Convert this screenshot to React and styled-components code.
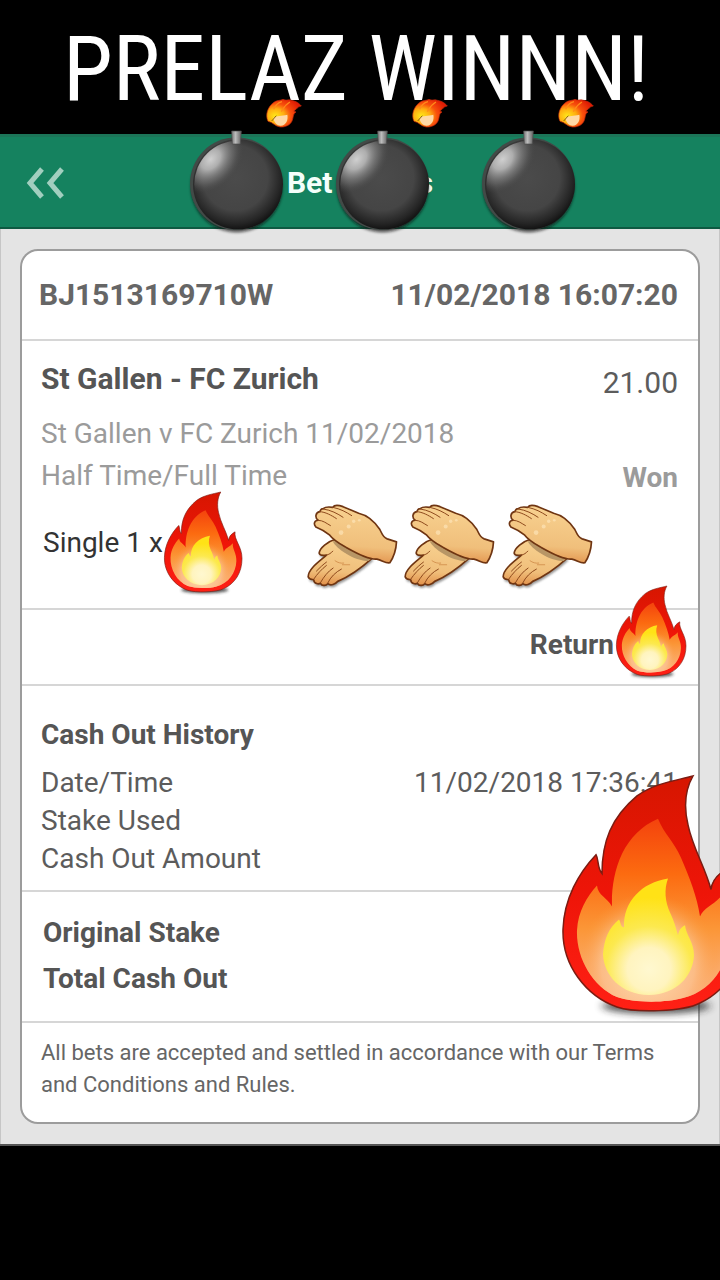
import React from "react";
import styled, { createGlobalStyle } from "styled-components";

const GlobalStyle = createGlobalStyle`
  * {
    box-sizing: border-box;
  }

  body {
    margin: 0;
    background: #000;
    font-family: Roboto, "Liberation Sans", sans-serif;
  }
`;

const Page = styled.main`
  min-height: 100vh;
  overflow: hidden;
  background: #000;
`;

const Headline = styled.h1`
  margin: 0;
  padding: 8px 8px 2px 0;
  color: #fff;
  font-family: "Roboto Condensed", Roboto, sans-serif;
  font-size: 90px;
  font-weight: 400;
  line-height: 124px;
  text-align: center;
  white-space: nowrap;
`;

const Screen = styled.section`
  background: #e4e4e4;
  border-bottom: 2px solid #555;
`;

const Toolbar = styled.header`
  position: relative;
  display: grid;
  grid-template-columns: 64px 1fr 64px;
  align-items: center;
  height: 95px;
  padding: 2px 13px 0;
  background: #15825f;
  border-top: 3px solid #1c7558;
  border-bottom: 2px solid #0e5a42;
`;

const BackButton = styled.button`
  display: flex;
  align-items: center;
  justify-content: center;
  height: 64px;
  padding: 0;
  background: none;
  border: none;
  cursor: pointer;
`;

const ToolbarTitle = styled.h2`
  margin: 0;
  color: #f4fffb;
  font-size: 30px;
  font-weight: 700;
  line-height: 36px;
  text-align: center;
`;

const Content = styled.div`
  padding: 20px 19px;
  border: 1px solid #c6c6c6;
  border-width: 0 1px;
`;

const Card = styled.article`
  background: #fff;
  border: 2px solid #9c9c9c;
  border-radius: 18px;
`;

const Section = styled.section`
  position: relative;
  padding: ${(props) => props.$padding};
  border-bottom: 2px solid #d6d6d6;

  &:last-child {
    border-bottom: none;
  }
`;

const Split = styled.div`
  display: flex;
  justify-content: space-between;
`;

const Receipt = styled.span`
  color: #666;
  font-size: 30px;
  font-weight: 700;
  line-height: 88px;
`;

const Column = styled.div`
  display: flex;
  flex-direction: column;
  align-items: ${(props) => (props.$end ? "flex-end" : "flex-start")};
`;

const Title = styled.h3`
  margin: 0;
  color: #555;
  font-size: 28px;
  font-weight: 700;
  line-height: ${(props) => props.$line || 38}px;
`;

const Selection = styled.h3`
  margin: 0 0 14px;
  color: #555;
  font-size: 30px;
  font-weight: 700;
  line-height: 40px;
`;

const Muted = styled.span`
  color: #9b9b9b;
  font-size: 28px;
  line-height: 42px;
`;

const Result = styled.strong`
  color: #9b9b9b;
  font-size: 28px;
  line-height: 42px;
`;

const Odds = styled.span`
  margin-bottom: 50px;
  color: #5c5c5c;
  font-size: 30px;
  line-height: 48px;
`;

const Stake = styled.p`
  margin: 23px 0 0 2px;
  color: #333;
  font-size: 28px;
  line-height: 42px;
`;

const ReturnLabel = styled.div`
  padding-right: 64px;
  color: #555;
  font-size: 28px;
  font-weight: 700;
  line-height: 38px;
  text-align: right;
`;

const History = styled.dl`
  margin: 10px 0 0;
`;

const HistoryRow = styled.div`
  display: flex;
  justify-content: space-between;
  color: #5c5c5c;
  font-size: 28px;
  line-height: 38px;

  dd {
    margin: 0;
  }
`;

const Terms = styled.p`
  margin: 0;
  color: #666;
  font-size: 22px;
  line-height: 32px;
`;

const Sticker = styled.svg`
  position: absolute;
  z-index: 1;
  top: ${(props) => props.$top}px;
  left: ${(props) => props.$left};
  right: ${(props) => props.$right};
  width: ${(props) => props.$width}px;
  height: ${(props) => props.$height}px;
  overflow: visible;
  pointer-events: none;
`;

const Flame = ({ id, ...place }) => (
  <Sticker viewBox="0 0 180 236" preserveAspectRatio="none" aria-hidden="true" {...place}>
    <defs>
      <linearGradient id={`${id}-red`} x1="0" y1="0" x2="0" y2="1">
        <stop offset="0" stopColor="#d61600" />
        <stop offset="0.5" stopColor="#ee1508" />
        <stop offset="1" stopColor="#ff2015" />
      </linearGradient>
      <linearGradient id={`${id}-orange`} x1="0" y1="0" x2="0" y2="1">
        <stop offset="0" stopColor="#f4430d" />
        <stop offset="0.3" stopColor="#fc6b10" />
        <stop offset="0.6" stopColor="#fb9637" />
        <stop offset="1" stopColor="#fbb98e" />
      </linearGradient>
      <radialGradient id={`${id}-halo`} gradientUnits="userSpaceOnUse" cx="86" cy="190" r="72">
        <stop offset="0.3" stopColor="#fdd3a4" />
        <stop offset="0.65" stopColor="#fcc08c" stopOpacity="0.8" />
        <stop offset="1" stopColor="#fb9637" stopOpacity="0" />
      </radialGradient>
      <radialGradient id={`${id}-core`} gradientUnits="userSpaceOnUse" cx="87" cy="194" r="72">
        <stop offset="0" stopColor="#fff8d0" />
        <stop offset="0.3" stopColor="#fff4bf" />
        <stop offset="0.6" stopColor="#fce94f" />
        <stop offset="1" stopColor="#ffe216" />
      </radialGradient>
      <filter id={`${id}-soft`} x="-20%" y="-100%" width="140%" height="300%">
        <feGaussianBlur stdDeviation="4" />
      </filter>
    </defs>
    <ellipse cx="94" cy="231" rx="54" ry="8" fill="#222" opacity="0.75" filter={`url(#${id}-soft)`} />
    <path
      d="M131 0C123 14 122 32 126 49C131 73 143 91 149 114C150 105 155 99 164 94C161 113 180 128 180 157C180 190 164 216 138 228C121 237 73 238 55 232C24 221 0 190 1 154C2 123 17 97 34 79C37 84 35 92 40 98C40 66 49 42 75 20C93 7 112 5 131 0Z"
      fill={`url(#${id}-red)`}
      stroke="#7b1c12"
      strokeWidth="1.5"
    />
    <path
      d="M96 43C102 58 112 66 119 82C128 103 135 121 138 141C142 132 151 130 159 121C157 134 168 145 167 163C166 191 149 216 121 223C104 228 71 228 55 222C30 211 14 182 15 155C16 136 25 121 35 110C36 120 45 122 50 131C49 96 61 58 96 43Z"
      fill={`url(#${id}-orange)`}
    />
    <path
      d="M96 43C102 58 112 66 119 82C128 103 135 121 138 141C142 132 151 130 159 121C157 134 168 145 167 163C166 191 149 216 121 223C104 228 71 228 55 222C30 211 14 182 15 155C16 136 25 121 35 110C36 120 45 122 50 131C49 96 61 58 96 43Z"
      fill={`url(#${id}-halo)`}
    />
    <path
      d="M106 103C102 114 103 126 108 137C112 145 114 153 116 160C117 155 119 152 123 150C124 160 132 167 132 180C131 200 116 219 87 220C58 219 42 200 41 179C42 164 47 152 57 144C59 147 58 151 62 152C61 126 80 107 106 103Z"
      fill={`url(#${id}-core)`}
    />
  </Sticker>
);

const Bomb = ({ id, ...place }) => (
  <Sticker viewBox="24 24 348 411" $width={116} $height={137} $top={-39} aria-hidden="true" {...place}>
    <defs>
      <radialGradient id={`${id}-ball`} cx="0.47" cy="0.43" r="0.6">
        <stop offset="0" stopColor="#4b4b4b" />
        <stop offset="0.6" stopColor="#454545" />
        <stop offset="0.85" stopColor="#242424" />
        <stop offset="1" stopColor="#0b0b0b" />
      </radialGradient>
      <radialGradient
        id={`${id}-shine`}
        gradientUnits="userSpaceOnUse"
        cx="0"
        cy="0"
        r="92"
        gradientTransform="translate(92 208) rotate(-48) scale(1.25 0.9)"
      >
        <stop offset="0" stopColor="#d0d0d0" />
        <stop offset="0.3" stopColor="#bababa" stopOpacity="0.9" />
        <stop offset="0.7" stopColor="#808080" stopOpacity="0.45" />
        <stop offset="1" stopColor="#4b4b4b" stopOpacity="0" />
      </radialGradient>
      <linearGradient id={`${id}-neck`} x1="0" x2="1">
        <stop offset="0" stopColor="#777" />
        <stop offset="0.4" stopColor="#bcbcbc" />
        <stop offset="1" stopColor="#626262" />
      </linearGradient>
      <radialGradient id={`${id}-spark`} cx="0.25" cy="0.6" r="0.75">
        <stop offset="0" stopColor="#ffe81a" />
        <stop offset="0.35" stopColor="#ffab10" />
        <stop offset="0.6" stopColor="#f8500c" />
        <stop offset="1" stopColor="#e01c04" />
      </radialGradient>
      <filter id={`${id}-soft`} x="-20%" y="-20%" width="140%" height="140%">
        <feGaussianBlur stdDeviation="5" />
      </filter>
    </defs>
    <circle cx="170" cy="290" r="137" fill="#111" opacity="0.7" filter={`url(#${id}-soft)`} />
    <circle cx="169" cy="281" r="139" fill="#424a47" />
    <circle cx="174" cy="283" r="135" fill={`url(#${id}-ball)`} />
    <circle cx="174" cy="283" r="131" fill={`url(#${id}-shine)`} />
    <path d="M155 123H184L181 162H157Z" fill={`url(#${id}-neck)`} stroke="#4d4d4d" strokeWidth="2" />
    <path
      d="M264 94C255 75 263 51 279 39C289 30 302 32 309 28C317 33 323 28 331 30C345 34 352 34 364 48C351 50 350 59 341 63L348 66C338 71 341 82 336 93C331 105 316 112 301 111C286 110 278 96 264 94Z"
      fill={`url(#${id}-spark)`}
      stroke="#c5280b"
      strokeWidth="2"
    />
    <path d="M306 35C294 38 285 48 281 58M330 36C314 45 310 55 304 65" fill="none" stroke="#ff8a1a" strokeWidth="4" />
    <path d="M280 83C291 76 304 79 322 74C325 91 318 106 302 107C289 106 282 96 280 83Z" fill="#ffd9a6" />
    <path d="M275 93L289 77" stroke="#8a6208" strokeWidth="3" />
  </Sticker>
);

const Hands = ({ id, ...place }) => (
  <Sticker viewBox="50 42 276 256" $width={92} $height={85} aria-hidden="true" {...place}>
    <defs>
      <linearGradient id={`${id}-skin`} x1="0.5" y1="0" x2="0.4" y2="1">
        <stop offset="0" stopColor="#f8d291" />
        <stop offset="0.7" stopColor="#f0bf7b" />
        <stop offset="1" stopColor="#e2924c" />
      </linearGradient>
      <filter id={`${id}-soft`} x="-20%" y="-20%" width="140%" height="140%">
        <feGaussianBlur stdDeviation="3" />
      </filter>
    </defs>
    <path
      d="M133 149C112 155 88 174 86 190C88 199 101 197 108 196C89 213 53 237 53 261C56 272 69 268 70 271C70 284 86 283 90 281C95 291 108 287 112 282C121 290 135 283 142 275C178 260 216 232 246 205C231 177 168 151 133 149Z"
      transform="translate(3 8)"
      fill="#333"
      opacity="0.5"
      filter={`url(#${id}-soft)`}
    />
    <g stroke="#6f3512" strokeWidth="5" strokeLinejoin="round" strokeLinecap="round">
      <path
        d="M133 149C112 155 88 174 86 190C88 199 101 197 108 196C89 213 53 237 53 261C56 272 69 268 70 271C70 284 86 283 90 281C95 291 108 287 112 282C121 290 135 283 142 275C178 260 216 232 246 205C231 177 168 151 133 149Z"
        fill={`url(#${id}-skin)`}
      />
      <path d="M127 154C137 176 190 213 235 214L249 201L177 154Z" fill="#b89666" stroke="none" />
      <path
        d="M98 56C105 50 115 50 127 52C132 44 146 46 158 50L205 70C232 76 252 94 269 119C275 129 276 141 291 147L319 156C318 176 311 201 299 219C286 222 276 211 260 208C233 211 189 185 164 171C145 160 127 148 118 136C104 124 89 116 76 111C68 102 72 91 83 91C73 84 74 67 88 65C90 59 94 56 98 56Z"
        fill={`url(#${id}-skin)`}
      />
    </g>
    <g fill="none" stroke="#8d481b" strokeWidth="3" strokeLinecap="round">
      <path d="M88 65C105 66 123 76 138 86M98 57C121 60 142 71 158 82M127 52C151 57 167 66 184 77M83 91C98 91 109 101 120 107" />
      <path d="M108 196C116 194 122 190 127 184M70 268C80 253 94 238 108 227M90 279C99 263 112 245 128 235M112 280C120 262 136 247 153 238M78 244C89 233 98 224 108 217" />
      <path d="M134 213C142 219 151 221 160 220M156 225L178 225" stroke="#c77d3b" strokeWidth="2" />
    </g>
    <g fill="#ffe9c0" opacity="0.6">
      <circle cx="190" cy="94" r="5" />
      <circle cx="175" cy="110" r="6" />
      <circle cx="152" cy="128" r="7" />
      <circle cx="207" cy="91" r="4" />
    </g>
  </Sticker>
);

const history = [
  { label: "Date/Time", value: "11/02/2018 17:36:41" },
  { label: "Stake Used" },
  { label: "Cash Out Amount" },
];

const bombs = ["-172px", "-26px", "120px"];
const hands = [285, 382, 480];

export default function App() {
  return (
    <Page>
      <GlobalStyle />
      <Headline>PRELAZ WINNN!</Headline>
      <Screen>
        <Toolbar>
          <BackButton aria-label="Back">
            <svg width="38" height="32" viewBox="0 0 38 32" fill="none" stroke="#a2cfbf" strokeWidth="5">
              <path d="M16 2L4 16L16 30M36 2L24 16L36 30" />
            </svg>
          </BackButton>
          <ToolbarTitle>Bet Details</ToolbarTitle>
          {bombs.map((offset, i) => (
            <Bomb key={offset} id={`bomb${i}`} $left={`calc(50% + ${offset})`} />
          ))}
        </Toolbar>
        <Content>
          <Card>
            <Section $padding="0 20px 0 17px">
              <Split>
                <Receipt>BJ1513169710W</Receipt>
                <Receipt>11/02/2018 16:07:20</Receipt>
              </Split>
            </Section>

            <Section $padding="18px 20px 44px 19px">
              <Split>
                <Column>
                  <Selection>St Gallen - FC Zurich</Selection>
                  <Muted>St Gallen v FC Zurich 11/02/2018</Muted>
                  <Muted>Half Time/Full Time</Muted>
                </Column>
                <Column $end>
                  <Odds>21.00</Odds>
                  <Result>Won</Result>
                </Column>
              </Split>
              <Stake>Single 1 x</Stake>
              <Flame id="flame-stake" $top={151} $left="142px" $width={78} $height={100} />
              {hands.map((left, i) => (
                <Hands key={left} id={`hands${i}`} $top={163} $left={`${left}px`} />
              ))}
            </Section>

            <Section $padding="16px 20px 20px">
              <ReturnLabel>Return</ReturnLabel>
              <Flame id="flame-return" $top={-24} $right="12px" $width={70} $height={90} />
            </Section>

            <Section $padding="30px 20px 12px 19px">
              <Title>Cash Out History</Title>
              <History>
                {history.map((row) => (
                  <HistoryRow key={row.label}>
                    <dt>{row.label}</dt>
                    <dd>{row.value}</dd>
                  </HistoryRow>
                ))}
              </History>
              <Flame id="flame-big" $top={90} $right="-44px" $width={180} $height={235} />
            </Section>

            <Section $padding="18px 20px 19px 21px">
              <Title $line={46}>Original Stake</Title>
              <Title $line={46}>Total Cash Out</Title>
            </Section>

            <Section $padding="14px 20px 21px 19px">
              <Terms>
                All bets are accepted and settled in accordance with our Terms and Conditions and Rules.
              </Terms>
            </Section>
          </Card>
        </Content>
      </Screen>
    </Page>
  );
}
